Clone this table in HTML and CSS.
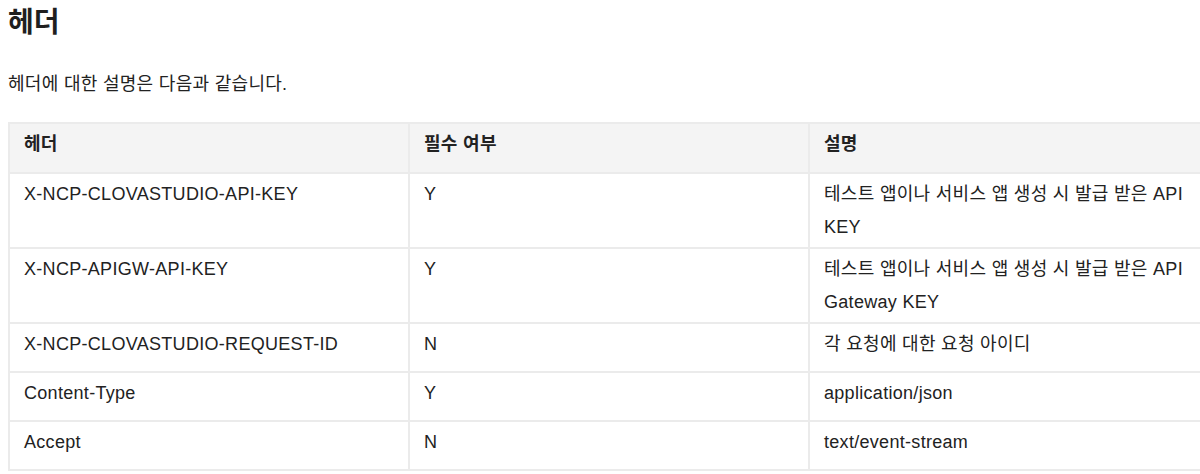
FILE: index.html
```html
<!DOCTYPE html>
<html lang="ko">
<head>
<meta charset="utf-8">
<link rel="stylesheet" href="styles.css">
</head>
<body>
<div class="page">
  <h1 class="title">헤더</h1>
  <p class="lead">헤더에 대한 설명은 다음과 같습니다.</p>
  <div class="table-wrap">
    <table class="spec">
      <colgroup>
        <col class="c1"><col class="c2"><col class="c3">
      </colgroup>
      <thead>
        <tr><th>헤더</th><th>필수 여부</th><th>설명</th></tr>
      </thead>
      <tbody>
        <tr><td>X-NCP-CLOVASTUDIO-API-KEY</td><td>Y</td><td>테스트 앱이나 서비스 앱 생성 시 발급 받은 API KEY</td></tr>
        <tr><td>X-NCP-APIGW-API-KEY</td><td>Y</td><td>테스트 앱이나 서비스 앱 생성 시 발급 받은 API Gateway KEY</td></tr>
        <tr><td>X-NCP-CLOVASTUDIO-REQUEST-ID</td><td>N</td><td>각 요청에 대한 요청 아이디</td></tr>
        <tr><td>Content-Type</td><td>Y</td><td>application/json</td></tr>
        <tr><td>Accept</td><td>N</td><td>text/event-stream</td></tr>
      </tbody>
    </table>
  </div>
</div>
</body>
</html>
```

FILE: styles.css
```css
html, body {
  margin: 0;
  padding: 0;
  overflow: hidden;
  background: #ffffff;
}

.page {
  padding: 0 0 0 8px;
  font-family: "Liberation Sans", "Noto Sans CJK KR", sans-serif;
  color: #222222;
}

.title {
  margin: 0;
  padding-top: 5px;
  font-size: 28px;
  line-height: 36px;
  font-weight: 700;
  color: #1f1f1f;
}

.lead {
  margin: 0;
  padding-top: 30px;
  font-size: 18px;
  line-height: 27px;
  letter-spacing: 0.3px;
}

.table-wrap {
  margin-top: 24px;
  width: 1200px;
}

.spec {
  width: 1200px;
  table-layout: fixed;
  border-collapse: collapse;
  font-size: 18px;
  line-height: 33px;
  letter-spacing: 0.3px;
}

.spec col { width: 400px; }

.spec thead tr { height: 50px; }
.spec tbody tr { height: 49px; }

.spec th,
.spec td {
  border: 2px solid #ebebeb;
  text-align: left;
  vertical-align: top;
  padding: 4px 14px 3px;
}

.spec th {
  background: #f4f4f4;
  font-weight: 700;
}
```
